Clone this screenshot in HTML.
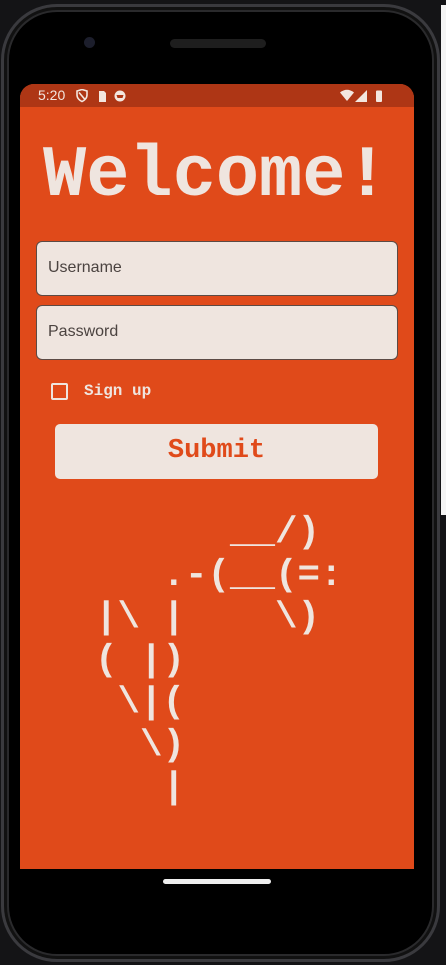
<!DOCTYPE html>
<html><head><meta charset="utf-8"><style>
*{margin:0;padding:0;box-sizing:border-box}
body{width:446px;height:965px;background:#141416;position:relative;overflow:hidden;font-family:"Liberation Sans",sans-serif}
.strip{position:absolute;left:441px;top:5px;width:5px;height:510px;background:#f4f4f4}
.phone{position:absolute;left:1px;top:4px;width:439px;height:958px;border-radius:56px;background:#000;border:3px solid #3a3a3e;box-shadow:inset 0 0 0 3px #111,inset 0 0 0 5px #2a2a2c}
.cam{position:absolute;left:84px;top:37px;width:11px;height:11px;border-radius:50%;background:#1c1e2c}
.spk{position:absolute;left:170px;top:39px;width:96px;height:9px;border-radius:5px;background:#1e1e1e}
.screen{position:absolute;left:20px;top:84px;width:394px;height:785px;background:#e04a1a;border-radius:14px 14px 0 0;overflow:hidden}
.sb{height:23px;background:#ae3615;color:#f3e6df;font-size:14px;position:relative}
.sb .t{position:absolute;left:18px;top:3px}
.w{position:absolute;left:23px;top:51px;font-family:"Liberation Mono",monospace;font-weight:bold;font-size:72px;color:#efe5df;letter-spacing:0}
.f{position:absolute;left:16px;width:362px;height:55px;background:#efe5df;border:1px solid #5c4a44;border-radius:6px;color:#4b4340;font-size:16px;padding:17px 0 0 11px}
.cb{position:absolute;left:31px;top:299px;width:17px;height:17px;border:2px solid #efe5df;border-radius:2px}
.su{position:absolute;left:64px;top:298px;font-family:"Liberation Mono",monospace;font-weight:bold;font-size:16px;color:#efe5df}
.btn{position:absolute;left:35px;top:340px;width:323px;height:55px;background:#efe5df;border-radius:5px;text-align:center;color:#e04a1a;font-family:"Liberation Mono",monospace;font-weight:bold;font-size:27px;line-height:55px}
pre{position:absolute;left:75px;top:428px;font-family:"Liberation Mono",monospace;font-size:37.5px;line-height:42.5px;color:#efe5df;font-weight:bold}
.home{position:absolute;left:163px;top:879px;width:108px;height:5px;border-radius:3px;background:#eee}
</style></head><body>
<div class="strip"></div>
<div class="phone"></div>
<div class="cam"></div><div class="spk"></div>
<div class="screen">
<div class="sb"><span class="t">5:20</span>
<svg style="position:absolute;left:56px;top:5px" width="72" height="14" viewBox="0 0 72 14" fill="none">
<path d="M1 2l5-1.5 5 1.5v4c0 3-2.5 5.5-5 6.5C3.5 11.5 1 9 1 6z M3 3.5l6 7" stroke="#f3e6df" stroke-width="1.6"/>
<path d="M23 2h5l2 2v9h-7z" fill="#f3e6df"/>
<circle cx="44" cy="7" r="5.5" fill="#f3e6df"/><path d="M40.5 6h7l-1 3h-5z" fill="#ae3615"/>
</svg>
<svg style="position:absolute;left:320px;top:5px" width="50" height="14" viewBox="0 0 50 14">
<path d="M0 3.5Q7-2 14 3.5L7 12z" fill="#f3e6df"/>
<path d="M27 1v12h-12z" fill="#f3e6df"/>
<rect x="36" y="1.5" width="6" height="11.5" rx="1" fill="#f3e6df"/>
</svg></div>
<div class="w">Welcome!</div>
<div class="f" style="top:157px">Username</div>
<div class="f" style="top:221px">Password</div>
<div class="cb"></div><div class="su">Sign up</div>
<div class="btn">Submit</div>
<pre>      __/)
   .-(__(=:
|\ |    \)
( |)
 \|(
  \)
   |</pre>
</div>
<div class="home"></div>
</body></html>
